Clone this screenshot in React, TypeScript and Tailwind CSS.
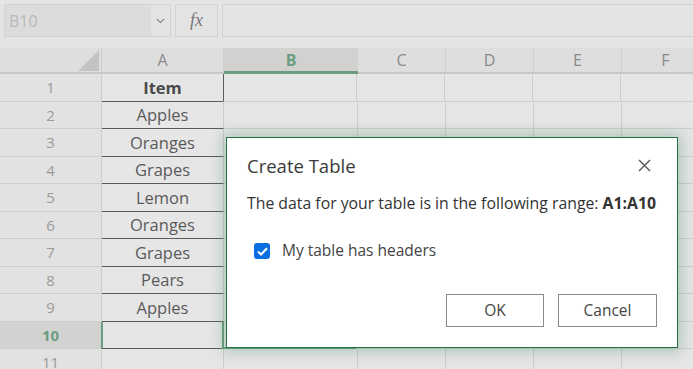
import React from 'react';

const cols = [
  { key: 'A', w: 'w-[122px]' },
  { key: 'B', w: 'w-[134px]' },
  { key: 'C', w: 'w-[88px]' },
  { key: 'D', w: 'w-[88px]' },
  { key: 'E', w: 'w-[88px]' },
  { key: 'F', w: 'w-[88px]' },
];

const items = ['Item', 'Apples', 'Oranges', 'Grapes', 'Lemon', 'Oranges', 'Grapes', 'Pears', 'Apples', ''];

const FormulaBar = () => (
  <div className="flex h-[48px] items-start pt-[4px] pl-[4px]">
    <div className="flex h-[33px] w-[167px] border border-[#d3d3d3] bg-[#dcdcdc]">
      <div className="flex flex-1 items-center pl-[4px] text-[16px] text-[#b9b9b9]">B10</div>
      <div className="flex w-[19px] items-center justify-center bg-[#e3e3e3]">
        <svg width="9" height="6" viewBox="0 0 9 6" fill="none" stroke="#7a7a7a" strokeWidth="1.1">
          <path d="M1 1.2 L4.5 4.6 L8 1.2" />
        </svg>
      </div>
    </div>
    <div className="ml-[4px] flex h-[33px] w-[43px] items-center justify-center border border-[#d3d3d3] bg-[#e3e3e3] font-['Liberation_Serif',serif] text-[18px] italic text-[#777]">
      fx
    </div>
    <div className="ml-[4px] h-[33px] flex-1 border-y border-l border-[#d3d3d3] bg-[#e4e4e4]" />
  </div>
);

const HeaderRow = () => (
  <div className="flex h-[26px] border-b-2 border-[#c8c8c8] bg-[#dedede]">
    <div className="relative w-[102px] shrink-0 border-r border-[#cdcdcd]">
      <svg className="absolute left-[78px] top-[2px]" width="21" height="21" viewBox="0 0 21 21">
        <path d="M21 0 L21 21 L0 21 Z" fill="#c3c3c3" />
      </svg>
    </div>
    {cols.map((c) =>
      c.key === 'B' ? (
        <div
          key={c.key}
          className={`${c.w} -mb-[2px] flex shrink-0 items-center justify-center border-b-[3px] border-[#6b9d80] bg-[#d1d1d0] text-[16px] font-bold text-[#6b9d80]`}
        >
          B
        </div>
      ) : (
        <div
          key={c.key}
          className={`${c.w} flex shrink-0 items-center justify-center border-r border-[#cdcdcd] text-[16px] text-[#8a8a8a]`}
        >
          {c.key}
        </div>
      )
    )}
  </div>
);

const GridRow = ({ n, item }: { n: number; item: string }) => {
  const selected = n === 10;
  return (
    <div className="flex h-[27.5px]">
      <div
        className={`flex w-[102px] shrink-0 items-center justify-center border-b border-r border-[#cdcdcd] text-[15px] ${
          selected ? 'bg-[#d2d2d1] font-bold text-[#6b9d80]' : 'bg-[#e2e2e2] text-[#9a9a9a]'
        }`}
      >
        {n}
      </div>
      <div
        className={`flex w-[122px] shrink-0 items-center justify-center border-b border-[#5c5c5c] pt-[2px] text-[16.5px] ${
          n === 1 ? 'border-r font-bold text-[#4a4a4a]' : 'text-[#5a5a5a]'
        } ${selected ? 'border-l-2 border-l-[#6b9d80] -ml-[1px]' : ''} ${n === 1 ? '' : 'border-r border-r-[#cdcdcd]'}`}
      >
        {item}
      </div>
      <div
        className={`w-[134px] shrink-0 border-b border-r ${
          selected ? 'border-b-2 border-l-2 border-[#6b9d80] -ml-[1px]' : n === 1 ? 'border-[#cdcdcd] -ml-[1px] border-l border-l-[#5c5c5c]' : 'border-[#cdcdcd]'
        }`}
      />
      {cols.slice(2).map((c) => (
        <div key={c.key} className={`${c.w} shrink-0 border-b border-r border-[#cdcdcd]`} />
      ))}
    </div>
  );
};

const Dialog = () => (
  <div className="absolute left-[226px] top-[137px] flex h-[211px] w-[452px] flex-col border border-[#217346] bg-white px-[20px] shadow-[0_0_14px_3px_rgba(60,130,90,0.35)]">
    <div className="mt-[14px] flex items-center justify-between">
      <span className="text-[18.5px] text-[#3a3a3a]">Create Table</span>
      <svg className="mr-[6px]" width="13" height="13" viewBox="0 0 13 13" stroke="#555" strokeWidth="1.4">
        <path d="M1 1 L12 12 M12 1 L1 12" />
      </svg>
    </div>
    <div className="mt-[12px] whitespace-nowrap text-[15.8px] text-[#333]">
      The data for your table is in the following range: <span className="font-bold">A1:A10</span>
    </div>
    <div className="ml-[7px] mt-[24px] flex items-center gap-[12px]">
      <div className="flex h-[16px] w-[16px] items-center justify-center rounded-[3px] bg-[#0a6fe0]">
        <svg width="11" height="9" viewBox="0 0 11 9" fill="none" stroke="white" strokeWidth="2">
          <path d="M1 4.5 L4 7.5 L10 1.2" />
        </svg>
      </div>
      <span className="text-[15.5px] text-[#444]">My table has headers</span>
    </div>
    <div className="mt-auto mb-[20px] flex justify-end gap-[14px]">
      <div className="flex h-[33px] w-[98px] items-center justify-center border border-[#8a8a8a] text-[15.5px] text-[#444]">
        OK
      </div>
      <div className="flex h-[33px] w-[99px] items-center justify-center border border-[#8a8a8a] text-[15.5px] text-[#444]">
        Cancel
      </div>
    </div>
  </div>
);

export default function App() {
  return (
    <div className="relative h-[369px] w-[693px] overflow-hidden bg-[#e4e4e4] font-['Open_Sans',sans-serif]">
      <FormulaBar />
      <HeaderRow />
      <div className="bg-[#e6e6e6]">
        {items.map((item, i) => (
          <GridRow key={i} n={i + 1} item={item} />
        ))}
        <div className="flex h-[27.5px]">
          <div className="flex w-[102px] shrink-0 items-start justify-center border-r border-[#cdcdcd] bg-[#e2e2e2] pt-[2px] text-[15px] text-[#9a9a9a]">
            11
          </div>
          {cols.map((c) => (
            <div key={c.key} className={`${c.w} shrink-0 border-r border-[#cdcdcd]`} />
          ))}
        </div>
      </div>
      <Dialog />
    </div>
  );
}
